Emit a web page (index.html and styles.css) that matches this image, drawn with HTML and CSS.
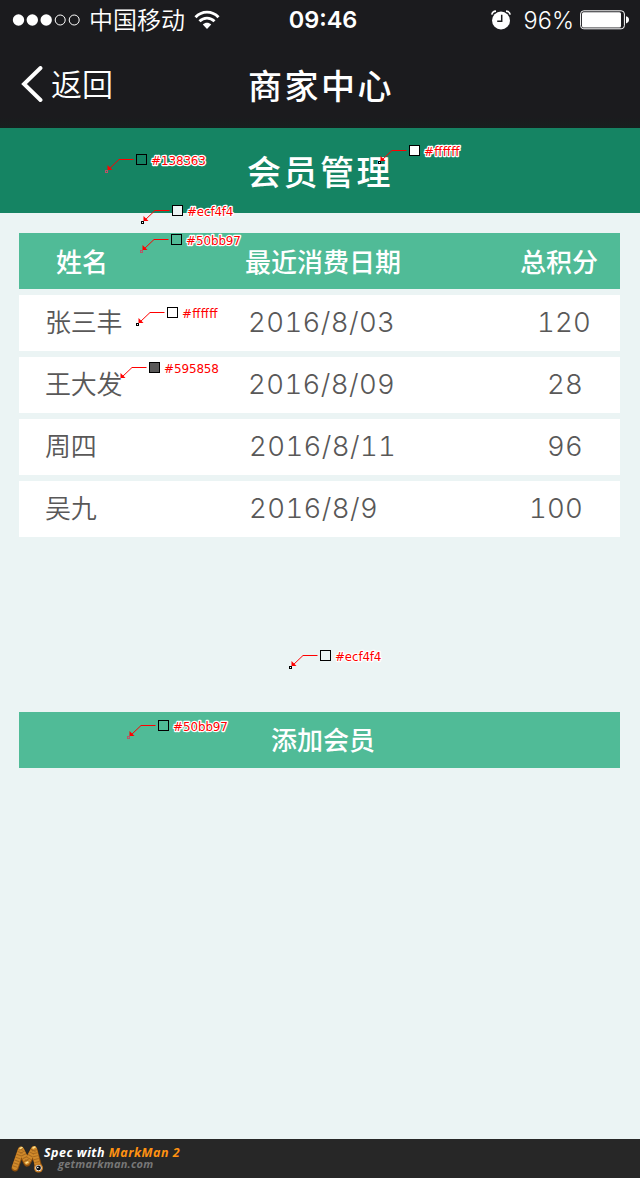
FILE: index.html
```html
<!DOCTYPE html>
<html lang="zh-CN">
<head>
<meta charset="utf-8">
<title>会员管理</title>
<link rel="stylesheet" href="styles.css">
</head>
<body>
<div class="screen">
  <header class="top">
    <div class="status">
      <div class="status-left">
        <svg class="signal" width="70" height="14" viewBox="0 0 70 14"><g fill="#fff"><circle cx="6.5" cy="7" r="5.7"/><circle cx="20.3" cy="7" r="5.7"/><circle cx="34.2" cy="7" r="5.7"/></g><g fill="none" stroke="#fff"><circle cx="48.2" cy="7" r="5"/><circle cx="62.2" cy="7" r="5"/></g></svg>
        <span class="carrier">中国移动</span>
        <svg class="wifi" width="26" height="20" viewBox="0 0 26 20"><g fill="none" stroke="#fff" stroke-width="2.9"><path d="M1.5 7.2C8 .4 18 .4 24.5 7.2"/><path d="M5.5 11.3C9.8 7.1 16.2 7.1 20.5 11.3"/></g><path d="M8.8 14.6C11.2 12.2 14.8 12.2 17.2 14.6L13 19z" fill="#fff"/></svg>
      </div>
      <span class="time">09:46</span>
      <div class="status-right">
        <svg class="alarm" width="20" height="20" viewBox="0 0 20 20"><circle cx="10" cy="10.5" r="9" fill="#fff"/><path d="M.8 4.6Q1.3 1.3 5 1.1M15 1.1Q18.7 1.3 19.2 4.6" fill="none" stroke="#fff" stroke-width="1.6"/><path d="M10.7 4.8v6.5H6.2" fill="none" stroke="#1b1b1d" stroke-width="1.5"/></svg>
        <span class="percent">96%</span>
        <svg class="battery" width="49" height="20" viewBox="0 0 49 20"><rect x=".6" y=".8" width="43.8" height="18" rx="3.2" fill="none" stroke="#fff"/><rect x="2" y="2.2" width="39" height="15.2" rx="1.5" fill="#fff"/><path d="M46 6.2q3 .8 3 3.6t-3 3.6z" fill="#fff"/></svg>
      </div>
    </div>
    <nav class="nav">
      <div class="back"><svg width="22" height="36" viewBox="0 0 22 36"><path d="M19.5 2L3 18L19.5 34" fill="none" stroke="#fff" stroke-width="3.9" stroke-linecap="round"/></svg><span>返回</span></div>
      <h1 class="nav-title">商家中心</h1>
    </nav>
  </header>
  <h2 class="page-title">会员管理</h2>
  <main class="content">
    <div class="table">
      <div class="row head"><span class="name">姓名</span><span class="date">最近消费日期</span><span class="score">总积分</span></div>
      <div class="row"><span class="name">张三丰</span><span class="date">2016/8/03</span><span class="score far">120</span></div>
      <div class="row"><span class="name">王大发</span><span class="date">2016/8/09</span><span class="score">28</span></div>
      <div class="row shifted"><span class="name">周四</span><span class="date">2016/8/11</span><span class="score">96</span></div>
      <div class="row shifted"><span class="name">吴九</span><span class="date">2016/8/9</span><span class="score">100</span></div>
    </div>
    <button class="add" type="button">添加会员</button>
  </main>
  <footer class="credit">
    <svg width="34" height="30" viewBox="0 0 34 30"><g fill="none" stroke-linecap="round" stroke-linejoin="round"><path d="M5 24L11 6.500L17 19L24 6L29 24" stroke="#8d4e0c" stroke-width="7"/><path d="M5 23L11 5.500L17 18L24 5L28 23" stroke="#d18a2b" stroke-width="5.800"/><path d="M5 23L11 5.500L17 18L24 5L28 23" stroke="#a86a1f" stroke-width="5.200" stroke-linecap="butt" stroke-dasharray="1 2"/><path d="M10 4.500l2-1M23 4l2-1M16 19l2-1" stroke="#ffe08a" stroke-width="1.500"/></g><circle cx="28.500" cy="24" r="4.500" fill="#c47b24"/><circle cx="28.500" cy="24" r="3.100" fill="#fff"/><circle cx="28.500" cy="24" r="2.400" fill="#111"/><circle cx="27.800" cy="23.500" r=".8" fill="#fff"/></svg>
    <div class="credit-text"><div class="spec">Spec with <b>MarkMan 2</b></div><div class="site">getmarkman.com</div></div>
  </footer>

  <svg class="marks" width="640" height="1178" viewBox="0 0 640 1178">
    <defs><g id="lead"><path d="M2 -2L12.500 -12H27" fill="none" stroke="#f00"/><path d="M1 -6.500L6 -1.500H1z" fill="#f00"/></g></defs>
    <g transform="translate(106.5 171.5)"><use href="#lead"/><rect class="dot pink" x="-1" y="-1" width="2" height="2"/><rect class="chip" x="30" y="-17" width="10" height="10" fill="#138363"/><text x="44.5" y="-6.5" textLength="55">#138363</text></g>
    <g transform="translate(379.5 162.5)"><use href="#lead"/><rect class="dot" x="-1" y="-1" width="2" height="2"/><rect class="chip" x="30" y="-17" width="10" height="10" fill="#fff"/><text x="44.5" y="-6.5" textLength="35.5">#ffffff</text></g>
    <g transform="translate(142.5 222.5)"><use href="#lead"/><rect class="dot" x="-1" y="-1" width="2" height="2"/><rect class="chip" x="30" y="-17" width="10" height="10" fill="#ecf4f4"/><text x="44.5" y="-6.5" textLength="46.5">#ecf4f4</text></g>
    <g transform="translate(141.5 251.5)"><use href="#lead"/><rect class="dot pink" x="-1" y="-1" width="2" height="2"/><rect class="chip" x="30" y="-17" width="10" height="10" fill="#50bb97"/><text x="44.5" y="-6.5" textLength="55">#50bb97</text></g>
    <g transform="translate(137.5 324.5)"><use href="#lead"/><rect class="dot" x="-1" y="-1" width="2" height="2"/><rect class="chip" x="30" y="-17" width="10" height="10" fill="#fff"/><text x="44.5" y="-6.5" textLength="35.5">#ffffff</text></g>
    <g transform="translate(119.5 379.5)"><use href="#lead"/><rect class="chip" x="30" y="-17" width="10" height="10" fill="#595858"/><text x="44.5" y="-6.5" textLength="55">#595858</text></g>
    <g transform="translate(290.5 667.5)"><use href="#lead"/><rect class="dot" x="-1" y="-1" width="2" height="2"/><rect class="chip" x="30" y="-17" width="10" height="10" fill="#ecf4f4"/><text x="44.5" y="-6.5" textLength="46.5">#ecf4f4</text></g>
    <g transform="translate(128.5 737.5)"><use href="#lead"/><rect class="dot pink" x="-1" y="-1" width="2" height="2"/><rect class="chip" x="30" y="-17" width="10" height="10" fill="#50bb97"/><text x="44.5" y="-6.5" textLength="55">#50bb97</text></g>
  </svg>
</div>
</body>
</html>
```
FILE: styles.css
```css
* { box-sizing: border-box; }
body { margin: 0; font-family: "Noto Sans CJK SC", sans-serif; }
svg { display: block; flex: none; }
.screen { position: relative; width: 640px; height: 1178px; display: flex; flex-direction: column; background: #ebf4f4; }
.top { height: 128px; flex: none; background: linear-gradient(#1b1b1e 0 92%, #17201f); color: #fff; }
.status { height: 40px; display: grid; grid-template-columns: 1fr auto 1fr; align-items: center; padding: 0 11px 0 12px; }
.status-left, .status-right { display: flex; align-items: center; height: 40px; }
.status-right { justify-content: flex-end; }
.carrier { font-size: 24px; font-weight: 350; line-height: 40px; margin: -2px 0 0 7px; }
.wifi { margin: 0 0 0 9px; }
.time { font: 600 23.5px/40px Inter, sans-serif; padding-left: 5px; }
.alarm { margin-right: 12px; }
.percent { font: 300 23.5px/40px Inter, sans-serif; margin-right: 6px; padding-top: 1px; letter-spacing: .1px; }
.nav { height: 88px; display: grid; grid-template-columns: 1fr auto 1fr; align-items: center; }
.back { display: flex; align-items: center; padding-left: 21px; gap: 8px; font-size: 31px; font-weight: 350; line-height: 44px; }
.back span { margin-top: -2px; }
.nav-title { margin: 0; padding: 1px 0 0 2px; font-size: 34px; font-weight: 500; line-height: 50px; letter-spacing: 2.5px; }
.page-title { height: 85px; flex: none; margin: 0; padding: 2px 0 0 0; text-align: center; color: #fff; background: #158463; font-size: 34px; font-weight: 500; line-height: 82px; letter-spacing: 2.5px; }
.content { flex: 1; display: flex; flex-direction: column; gap: 175px; padding: 20px 20px 0 19px; }
.table { display: flex; flex-direction: column; gap: 6px; }
.row { height: 56px; display: grid; grid-template-columns: 203px 1fr 126px; align-items: center; padding-left: 26px; background: #fff; color: #595858; font-size: 26px; font-weight: 350; line-height: 52px; }
.row > span { padding-bottom: 2px; }
.row .name { padding-bottom: 4px; letter-spacing: -.3px; }
.row .date, .row .score { font-family: Inter, sans-serif; font-size: 27.5px; font-weight: 300; letter-spacing: .2px; font-variant-numeric: tabular-nums; }
.row .date { letter-spacing: .4px; }
.row .score { padding-right: 37px; text-align: right; }
.row .score.far { padding-right: 29px; }
.row.head { color: #fff; background: #50bb97; }
.row.head > span { padding-bottom: 0; font-weight: 500; }
.row.head .name { padding-left: 11px; letter-spacing: 0; }
.row.head .date, .row.head .score { font-family: "Noto Sans CJK SC", sans-serif; font-size: 26px; font-weight: 500; letter-spacing: 0; }
.row.head .date { margin-left: -3px; }
.row.head .score { padding-right: 22px; }
.row.shifted .date { padding-left: 1px; }
.add { height: 56px; border: 0; padding: 0 0 2px 7px; color: #fff; background: #50bb97; font: 500 26px/54px "Noto Sans CJK SC", sans-serif; }
.credit { height: 39px; flex: none; display: flex; padding: 5px 0 0 10px; background: #272727; }
.credit-text { display: flex; flex-direction: column; font-family: "Open Sans", sans-serif; font-style: italic; font-weight: 700; }
.spec { color: #fff; font-size: 12.5px; line-height: 16px; padding-top: 1px; letter-spacing: .5px; }
.spec b { font-weight: 700; color: #ff9212; }
.site { padding-left: 14px; margin-top: -4px; color: #777; font-size: 11px; line-height: 14px; letter-spacing: .25px; }
.marks { position: absolute; left: 0; top: 0; pointer-events: none; }
.marks text { font: 12px "DejaVu Sans", sans-serif; fill: #f00; stroke: #fff; stroke-width: 2.4px; stroke-linejoin: round; paint-order: stroke; }
.chip { stroke: #000; }
.dot { fill: #fff; stroke: #000; }
.dot.pink { fill: none; stroke: #b95468; }
```
